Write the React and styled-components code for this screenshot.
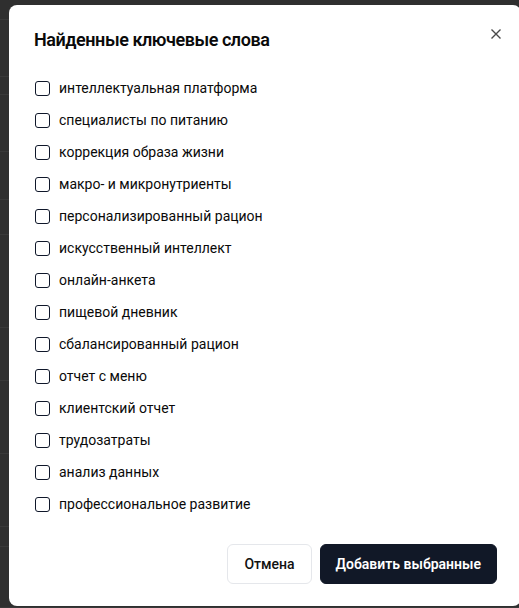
import React, { useState } from "react";
import styled, { createGlobalStyle } from "styled-components";

const GlobalStyle = createGlobalStyle`
  html, body {
    margin: 0;
    padding: 0;
    background: #2f2f2f;
  }
  * {
    box-sizing: border-box;
  }
`;

const Screen = styled.div`
  position: relative;
  width: 519px;
  height: 608px;
  overflow: hidden;
  background: #2f2f2f;
  font-family: Roboto, "Noto Sans", sans-serif;
`;

const BackRows = styled.div`
  display: flex;
  flex-direction: column;
`;

const BackRow = styled.div`
  border-bottom: 1px solid #393939;
`;

const Dialog = styled.div`
  position: absolute;
  left: 9px;
  top: 5px;
  width: 512px;
  height: 601px;
  background: #ffffff;
  border-radius: 8px;
  padding: 24px;
  display: flex;
  flex-direction: column;
`;

const Title = styled.h2`
  margin: -1px 0 0 1px;
  font-size: 18px;
  line-height: 24px;
  font-weight: 600;
  letter-spacing: -0.45px;
  color: #0a0a0a;
`;

const CloseButton = styled.button`
  position: absolute;
  top: 19px;
  right: 15px;
  width: 20px;
  height: 20px;
  padding: 0;
  border: none;
  background: none;
  display: flex;
  align-items: center;
  justify-content: center;
  color: #4a4a4a;
  cursor: pointer;
`;

const List = styled.div`
  margin-top: 20px;
  display: flex;
  flex-direction: column;
`;

const Option = styled.label`
  display: flex;
  align-items: center;
  gap: 9px;
  height: 32px;
  padding-left: 2px;
  font-size: 14px;
  color: #0a0a0a;
  cursor: pointer;
`;

const Box = styled.span`
  width: 15px;
  height: 15px;
  border: 1.5px solid #0f172a;
  border-radius: 3px;
  flex-shrink: 0;
  background: ${(p) => (p.$checked ? "#0f172a" : "#fff")};
`;

const Footer = styled.div`
  margin-top: 24px;
  display: flex;
  justify-content: flex-end;
  gap: 8px;
`;

const Button = styled.button`
  height: 40px;
  padding: 0 ${(p) => (p.$primary ? 15 : 16)}px;
  border-radius: 6px;
  font-family: inherit;
  font-size: 14px;
  font-weight: ${(p) => (p.$primary ? 600 : 500)};
  border: 1px solid ${(p) => (p.$primary ? "#111827" : "#e5e7eb")};
  background: ${(p) => (p.$primary ? "#111827" : "#ffffff")};
  color: ${(p) => (p.$primary ? "#ffffff" : "#111111")};
  cursor: pointer;
`;

const keywords = [
  "интеллектуальная платформа",
  "специалисты по питанию",
  "коррекция образа жизни",
  "макро- и микронутриенты",
  "персонализированный рацион",
  "искусственный интеллект",
  "онлайн-анкета",
  "пищевой дневник",
  "сбалансированный рацион",
  "отчет с меню",
  "клиентский отчет",
  "трудозатраты",
  "анализ данных",
  "профессиональное развитие",
];

// heights of the rows of the page behind the overlay
const backRows = [20, 57, 18, 57, 48, 35, 93, 53, 73, 73, 20, 61];

export default function App() {
  const [checked, setChecked] = useState({});

  return (
    <>
      <GlobalStyle />
      <Screen>
        <BackRows>
          {backRows.map((h, i) => (
            <BackRow key={i} style={{ height: h }} />
          ))}
        </BackRows>
        <Dialog>
          <Title>Найденные ключевые слова</Title>
          <CloseButton aria-label="Закрыть">
            <svg width="12" height="12" viewBox="0 0 12 12" fill="none">
              <path d="M1.5 1.5l9 9M10.5 1.5l-9 9" stroke="currentColor" strokeWidth="1.4" />
            </svg>
          </CloseButton>
          <List>
            {keywords.map((k) => (
              <Option key={k} onClick={() => setChecked({ ...checked, [k]: !checked[k] })}>
                <Box $checked={checked[k]} />
                {k}
              </Option>
            ))}
          </List>
          <Footer>
            <Button>Отмена</Button>
            <Button $primary>Добавить выбранные</Button>
          </Footer>
        </Dialog>
      </Screen>
    </>
  );
}
